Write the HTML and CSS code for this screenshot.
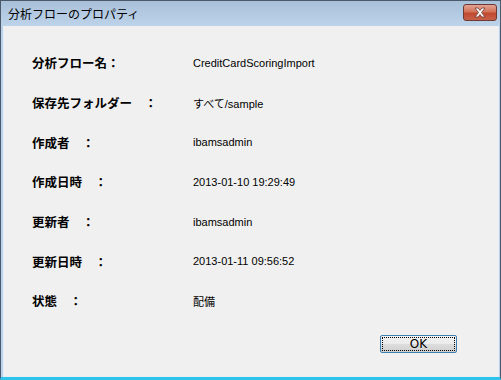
FILE: index.html
```html
<!DOCTYPE html>
<html lang="ja">
<head>
  <meta charset="UTF-8">
  <title>分析フローのプロパティ</title>
  <link rel="stylesheet" href="styles.css">
</head>
<body>
  <div class="window">
    <div class="titlebar">
      <span class="title">分析フローのプロパティ</span>
      <button class="close-btn" title="閉じる">
        <svg width="14" height="11" viewBox="0 0 14 11">
          <path d="M2 1 L5 1 L7 3.5 L9 1 L12 1 L8.5 5.5 L12 10 L9 10 L7 7.5 L5 10 L2 10 L5.5 5.5 Z" fill="#fff" stroke="#6b3a32" stroke-width="0.8"/>
        </svg>
      </button>
    </div>
    <div class="client">
      <div class="props">
        <div class="label">分析フロー名：</div>
        <div class="value">CreditCardScoringImport</div>
        <div class="label">保存先フォルダー　：</div>
        <div class="value">すべて/sample</div>
        <div class="label">作成者　：</div>
        <div class="value">ibamsadmin</div>
        <div class="label">作成日時　：</div>
        <div class="value">2013-01-10 19:29:49</div>
        <div class="label">更新者　：</div>
        <div class="value">ibamsadmin</div>
        <div class="label">更新日時　：</div>
        <div class="value">2013-01-11 09:56:52</div>
        <div class="label">状態　：</div>
        <div class="value">配備</div>
      </div>
      <div class="actions">
        <button class="ok-btn"><span>OK</span></button>
      </div>
    </div>
  </div>
</body>
</html>
```

FILE: styles.css
```css
html, body {
  margin: 0;
  padding: 0;
}
body {
  width: 501px;
  height: 380px;
  overflow: hidden;
  font-family: "Noto Sans CJK JP", "DejaVu Sans", sans-serif;
  background: #ffffff;
}
.window {
  box-sizing: border-box;
  width: 501px;
  height: 380px;
  display: flex;
  flex-direction: column;
  border-top: 1px solid #4a5a6c;
  border-left: 1px solid #4a5a6c;
  border-right: 1px solid #4a5a6c;
  background: #b9d1ea;
  border-bottom: 3px solid #2ec3ea;
}
.titlebar {
  height: 25px;
  display: flex;
  align-items: center;
  justify-content: space-between;
  padding: 0 3px 0 7px;
  background: linear-gradient(#a9c0d9, #bcd3ea);
}
.title {
  font-size: 12px;
  color: #000;
  line-height: 1;
}
.close-btn {
  width: 34px;
  height: 17px;
  margin-top: -3px;
  padding: 0;
  display: flex;
  align-items: center;
  justify-content: center;
  border: 1px solid #6b3a32;
  border-radius: 3px;
  background: linear-gradient(#e6a493 0%, #d2725a 45%, #bf4a2f 55%, #c9604a 100%);
}
.client {
  flex: 1;
  display: flex;
  flex-direction: column;
  margin: 0 1px 0 2px;
  border-left: 1px solid #e8eef5;
  border-right: 1px solid #e8eef5;
  border-bottom: 1px solid #e8eef5;
  background: #f0f0f0;
  padding: 17px 0 0 28px;
}
.props {
  display: grid;
  grid-template-columns: 161px auto;
  grid-auto-rows: 39.7px;
  align-items: center;
}
.label {
  font-size: 12.5px;
  font-weight: bold;
  color: #000;
}
.value {
  font-size: 11px;
  color: #000;
  font-family: "Liberation Sans", "Noto Sans CJK JP", sans-serif;
}
.actions {
  display: flex;
  justify-content: flex-end;
  padding: 14px 41px 0 0;
}
.ok-btn {
  width: 77px;
  height: 18px;
  padding: 1px;
  border: 1px solid #3c7fb1;
  border-radius: 2px;
  background: linear-gradient(#f2f2f2 0%, #ebebeb 50%, #dddddd 51%, #cfcfcf 100%);
  font-family: "DejaVu Sans", sans-serif;
  font-size: 12px;
  color: #000;
}
.ok-btn span {
  display: flex;
  align-items: center;
  justify-content: center;
  height: 100%;
  border: 1px dotted #000;
  box-sizing: border-box;
}
```
